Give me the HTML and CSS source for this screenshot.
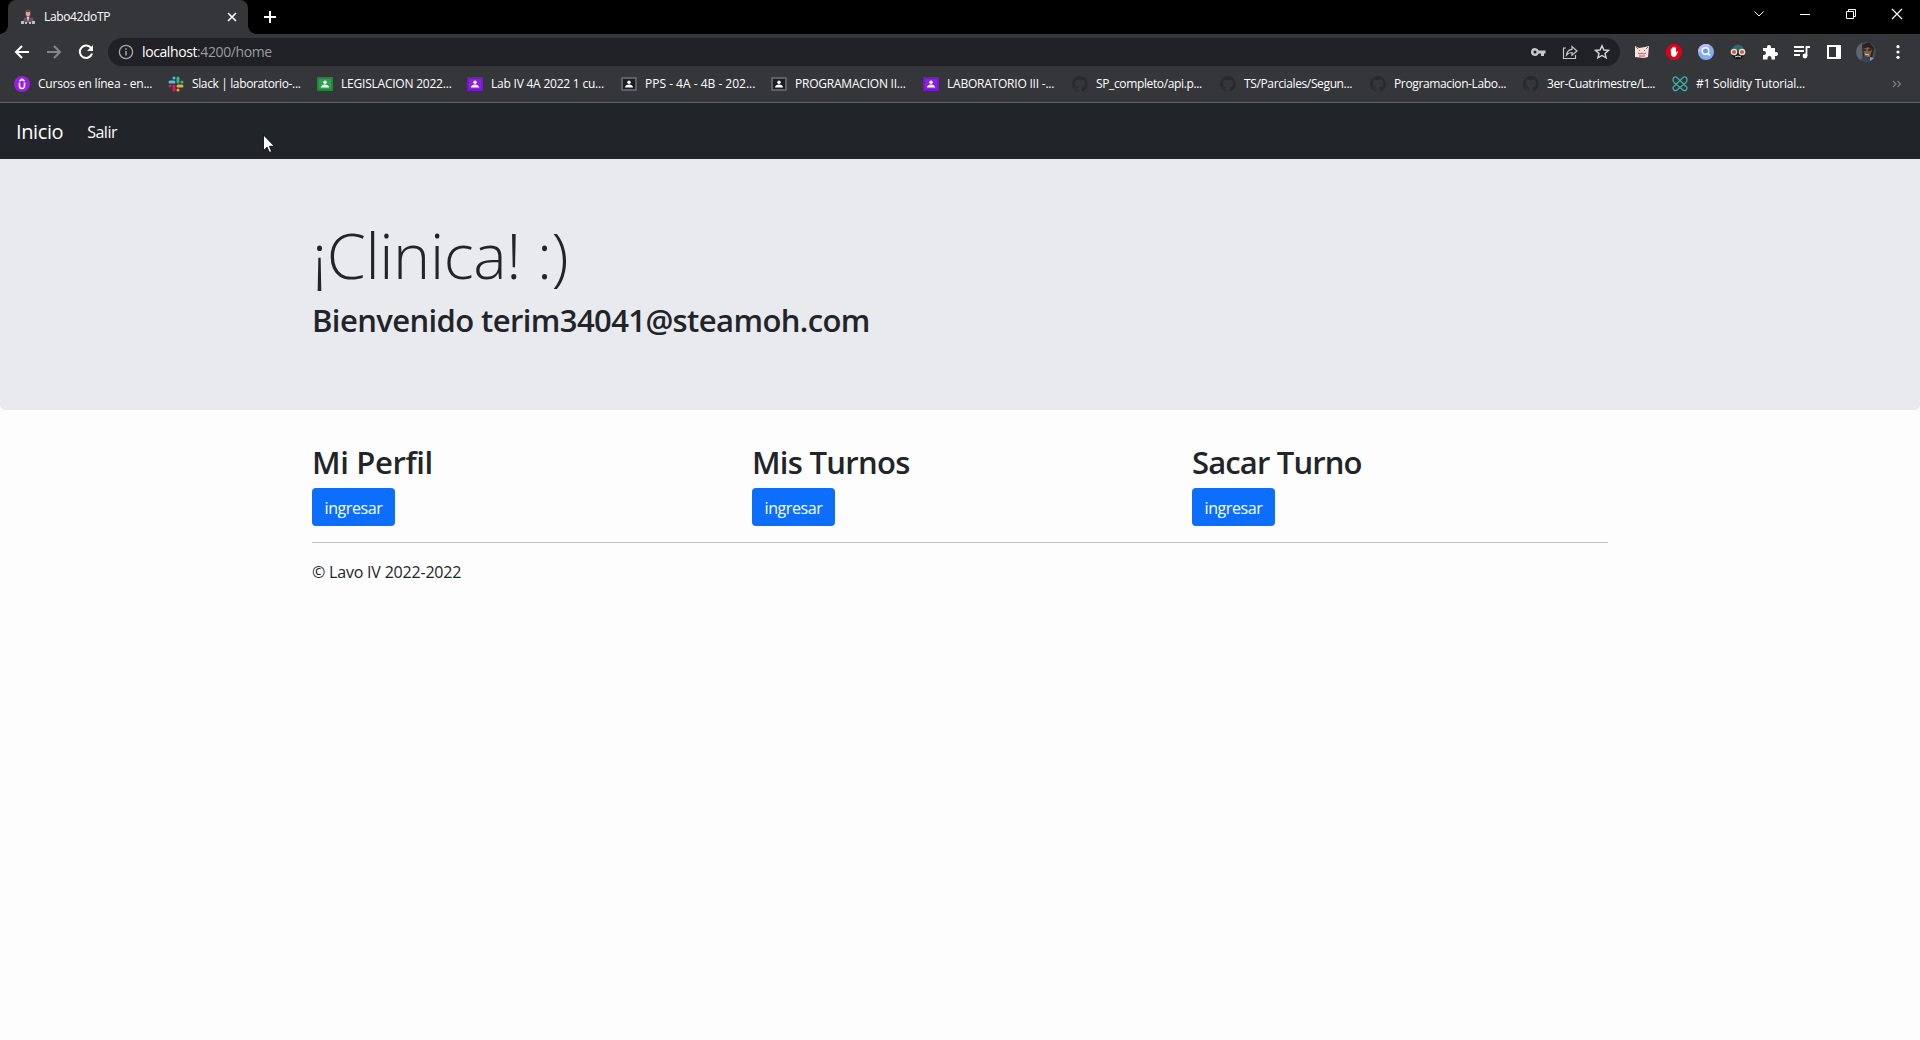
FILE: index.html
```html
<!DOCTYPE html>
<html lang="es">
<head>
<meta charset="utf-8">
<title>Labo42doTP</title>
<link rel="stylesheet" href="styles.css">
</head>
<body>
<svg class="defs" aria-hidden="true">
  <symbol id="classroom" viewBox="0 0 16 16"><rect y="1" width="16" height="14" rx="1" fill="currentColor"/><rect x="2" y="3" width="12" height="10" fill="var(--board)"/><circle cx="8" cy="6.2" r="1.7" fill="#fff"/><path d="M4 11.5c0-4 8-4 8 0z" fill="#fff"/></symbol>
  <symbol id="github" viewBox="0 0 16 16"><path fill="#292a2d" d="M8 0a8 8 0 0 0-2.5 15.6c.4.1.5-.2.5-.4v-1.5c-2.2.5-2.7-1-2.7-1-.4-.9-.9-1.2-.9-1.2-.7-.5.1-.5.1-.5.8.1 1.2.8 1.2.8.7 1.3 1.9.9 2.3.7.1-.5.3-.9.5-1.1-1.8-.2-3.6-.9-3.6-4 0-.9.3-1.6.8-2.1-.1-.2-.4-1 .1-2.1 0 0 .7-.2 2.2.8a7.6 7.6 0 0 1 4 0c1.500-1 2.200-.8 2.200-.8.4 1.100.2 1.900.1 2.100.5.6.8 1.300.8 2.100 0 3.100-1.900 3.700-3.700 3.900.3.300.6.800.6 1.500v2.200c0 .2.100.5.500.4A8 8 0 0 0 8 0z"/></symbol>
</svg>

<header class="browser">
  <div class="tabstrip">
    <div class="tab">
      <svg class="favicon" width="16" height="16" viewBox="0 0 16 16"><path d="M5 2l3-2 3 2v4l-1 2H6L5 6z" fill="#71434b"/><path d="M6 3h4v3L8 8 6 6z" fill="#d4a6a0"/><path d="M4 9l3-1 1 2 1-2 4 1 1 5H3z" fill="#6c526b"/><path d="M7 8l1 5 1-5z" fill="#f0f0f4"/><path d="M1 12h3v3H1zM12 12h3v3h-3zM5 13h2v2H5zM9 13h2v2H9z" fill="#a8c6d2"/></svg>
      <span class="tab-title">Labo42doTP</span>
      <svg class="tab-close" width="10" height="10" viewBox="0 0 10 10"><path d="M1 1l8 8M9 1L1 9" stroke="#fff" stroke-width="1.6"/></svg>
    </div>
    <svg class="tab-new" width="12" height="12" viewBox="0 0 12 12"><path d="M6 0v12M0 6h12" stroke="#fff" stroke-width="2"/></svg>
    <div class="window-buttons">
      <svg width="12" height="12" viewBox="0 0 12 12"><path d="M1.500 3.500L6 8l4.500-4.500" stroke="#fff" fill="none"/></svg>
      <svg width="12" height="12" viewBox="0 0 12 12"><path d="M1 6.500h10" stroke="#fff"/></svg>
      <svg width="12" height="12" viewBox="0 0 12 12"><path d="M1.500 3.500h7v7h-7zM3.500 3.500v-2h7v7h-2" stroke="#fff" fill="none"/></svg>
      <svg width="12" height="12" viewBox="0 0 12 12"><path d="M1 1l10 10M11 1L1 11" stroke="#fff" stroke-width="1.200"/></svg>
    </div>
  </div>

  <div class="toolbar">
    <div class="history">
      <svg width="16" height="16" viewBox="0 0 16 16"><path d="M15 8H2M8 2L2 8l6 6" stroke="#fff" stroke-width="2" fill="none"/></svg>
      <svg width="16" height="16" viewBox="0 0 16 16"><path d="M1 8h13M8 2l6 6-6 6" stroke="#85868a" stroke-width="2" fill="none"/></svg>
      <svg width="16" height="16" viewBox="0 0 16 16"><path d="M13.300 4.500A6.200 6.200 0 1 0 14 9.500" stroke="#fff" stroke-width="2" fill="none"/><path d="M15 1v6H9z" fill="#fff"/></svg>
    </div>
    <div class="omnibox">
      <svg width="16" height="16" viewBox="0 0 16 16"><circle cx="8" cy="8" r="6.600" stroke="#a5a7aa" stroke-width="1.300" fill="none"/><path d="M8 7v4.500M8 4.200v1.600" stroke="#a5a7aa" stroke-width="1.500"/></svg>
      <span class="url"><b>localhost</b>:4200/home</span>
      <div class="omnibox-actions">
        <svg width="16" height="16" viewBox="0 0 16 16"><path fill="#c5c7ca" fill-rule="evenodd" d="M5 4a4 4 0 1 0 3.700 5.500H11V12h3V9.500h1.500v-3H8.700A4 4 0 0 0 5 4zm0 2.500a1.500 1.500 0 1 1 0 3 1.500 1.500 0 0 1 0-3z"/></svg>
        <svg width="16" height="16" viewBox="0 0 16 16"><path d="M4 4H1.500v10.500h12V11M4.500 11c.5-4 2.500-5.500 5.500-5.700V2.500l5 4.500-5 4.300V8.500c-2.500 0-4 .7-5.500 2.500z" stroke="#c5c7ca" stroke-width="1.200" fill="none"/></svg>
        <svg width="16" height="16" viewBox="0 0 16 16"><path d="M8 1.800l1.900 4.200 4.600.4-3.500 3 1.100 4.500L8 11.500l-4.100 2.400L5 9.400l-3.500-3 4.600-.4z" stroke="#d5d7da" stroke-width="1.400" fill="none"/></svg>
      </div>
    </div>
    <div class="extensions">
      <svg width="16" height="16" viewBox="0 0 16 16"><path d="M1 2l4 2 6-1 4-1-1 11-4 1-9-1z" fill="#f6e2e2"/><path d="M5 6l1 1M10 7l1-1M4 9l2 1 2-1 2 1 2-1M5 12h6M2 3l2 2M14 3l-2 2" stroke="#cf4450" fill="none"/></svg>
      <svg width="16" height="16" viewBox="0 0 16 16"><path d="M5 0h6l5 5v6l-5 5H5l-5-5V5z" fill="#dc0018"/><path d="M4.800 8V5q.8-1 1.300 0V3.500q.7-1 1.300 0V3q.7-1 1.300 0v.7q.7-1 1.300 0V9l1-1.500q1-.5 1 .3L10 12q-2 2-4 .3Q4.800 11 4.800 8z" fill="#fff"/></svg>
      <svg width="16" height="16" viewBox="0 0 16 16"><circle cx="8" cy="8" r="8" fill="#83aef0"/><path d="M0 8a8 8 0 0 1 12-7L8 8z" fill="#b9b8f5"/><circle cx="7.500" cy="7" r="3.200" fill="#6999ed" stroke="#fff" stroke-width="1.400"/><path d="M10 9.500l2 2" stroke="#fff" stroke-width="1.400"/></svg>
      <svg width="16" height="16" viewBox="0 0 16 16"><path d="M2 6c1-7 11-7 12 0z" fill="#2b6870"/><path d="M2 7h12v5l-3 3H5l-3-3z" fill="#17191d"/><circle cx="4" cy="8" r="2.700" fill="#d85a3e" stroke="#e3e5df" stroke-width="1.300"/><circle cx="12" cy="8" r="2.700" fill="#d85a3e" stroke="#e3e5df" stroke-width="1.300"/><path d="M5 13q3-2 6 0" stroke="#ddd" fill="none"/></svg>
      <svg width="16" height="16" viewBox="0 0 16 16"><path fill="#fff" d="M1 4h4V3a2 2 0 0 1 4 0v1h4v4h1a2 2 0 0 1 0 4h-1v3.500H9.500V14a2 2 0 0 0-4 0v1.500H1V11h1a2 2 0 0 0 0-4H1z"/></svg>
      <svg width="16" height="16" viewBox="0 0 16 16"><path d="M0 3h10M0 7h10M0 11h6" stroke="#fff" stroke-width="1.800"/><path d="M12.500 12V3H16" stroke="#fff" stroke-width="1.800" fill="none"/><circle cx="11" cy="12" r="2.400" fill="#fff"/></svg>
      <svg width="16" height="16" viewBox="0 0 16 16"><path d="M1 1h14v14H1zM3 3v10h7V3z" fill="#fff" fill-rule="evenodd"/></svg>
      <svg class="avatar" width="20" height="20" viewBox="0 0 20 20"><clipPath id="round"><circle cx="10" cy="10" r="10"/></clipPath><g clip-path="url(#round)"><path d="M0 0h20v20H0z" fill="#454b4c"/><path d="M0 0h6v20H0z" fill="#5c6670"/><path d="M6 3l7-3 5 6-2 10-8 2z" fill="#2c211f"/><path d="M7 7l5-2 4 3-2 7-5 1z" fill="#805b48"/><path d="M7 8h3M12 8h3" stroke="#271d1b" stroke-width="1.500"/><path d="M1 20l8-6 5 2 3 4z" fill="#37445c"/><path d="M14 15l4 1v4h-4z" fill="#72a7b1"/><path d="M9 12l4 1" stroke="#ded4c5"/></g></svg>
      <svg width="16" height="16" viewBox="0 0 16 16"><g fill="#fff"><circle cx="8" cy="2.700" r="1.600"/><circle cx="8" cy="8" r="1.600"/><circle cx="8" cy="13.300" r="1.600"/></g></svg>
    </div>
  </div>

  <nav class="bookmarks">
    <a class="loose"><svg viewBox="0 0 16 16"><circle cx="8" cy="8" r="8" fill="#9b1de8"/><path d="M5.500 6.500V10a2.500 2.500 0 0 0 5 0V6.500M5.500 5L8 3.300 10.500 5" fill="none" stroke="#fff" stroke-width="1.600"/></svg><span>Cursos en línea - en...</span></a>
    <a><svg viewBox="0 0 16 16"><g stroke-width="3" stroke-linecap="round"><path d="M6 2v.1M2 6h4" stroke="#50bfe5"/><path d="M10 2v4M14 6v.1" stroke="#3eb27d"/><path d="M14 10h-4M10 14v.1" stroke="#e5ad39"/><path d="M6 14v-4M2 10v.1" stroke="#d5204f"/></g></svg><span>Slack | laboratorio-...</span></a>
    <a class="loose"><svg class="board-green"><use href="#classroom"/></svg><span>LEGISLACION 2022...</span></a>
    <a class="loose"><svg class="board-purple"><use href="#classroom"/></svg><span>Lab IV 4A 2022 1 cu...</span></a>
    <a class="looser"><svg class="board-gray"><use href="#classroom"/></svg><span>PPS - 4A - 4B - 202...</span></a>
    <a class="loose"><svg class="board-gray"><use href="#classroom"/></svg><span>PROGRAMACION II...</span></a>
    <a class="loose"><svg class="board-purple"><use href="#classroom"/></svg><span>LABORATORIO III -...</span></a>
    <a><svg><use href="#github"/></svg><span>SP_completo/api.p...</span></a>
    <a><svg><use href="#github"/></svg><span>TS/Parciales/Segun...</span></a>
    <a><svg><use href="#github"/></svg><span>Programacion-Labo...</span></a>
    <a><svg><use href="#github"/></svg><span>3er-Cuatrimestre/L...</span></a>
    <a class="loose"><svg viewBox="0 0 16 16"><g fill="none" stroke="#3aafa9" stroke-width="1.300"><path d="M1 3.500C1 1 3.500 0 5.500 2l8.700 8.500c2 2-.7 5.500-3.200 3.500L2 6.500C1.300 5.500 1 4.500 1 3.500z"/><path d="M15 3.500C15 1 12.500 0 10.500 2l-8.700 8.500c-2 2 .7 5.500 3.200 3.500l9-7.500c.7-1 1-2 1-3z"/></g></svg><span>#1 Solidity Tutorial...</span></a>
    <svg class="more" viewBox="0 0 10 10"><path d="M1 2l3 3-3 3M5.500 2l3 3-3 3" stroke="#7b7c80" stroke-width="1.200" fill="none"/></svg>
  </nav>
</header>

<nav class="navbar">
  <a class="brand">Inicio</a>
  <a class="nav-link">Salir</a>
</nav>

<main>
  <section class="jumbotron">
    <div class="container">
      <h1>¡Clinica! :)</h1>
      <h2 class="welcome">Bienvenido terim34041@steamoh.com</h2>
    </div>
  </section>
  <div class="container">
    <div class="cards">
      <section><h2 class="profile">Mi Perfil</h2><button>ingresar</button></section>
      <section><h2 class="appointments">Mis Turnos</h2><button>ingresar</button></section>
      <section><h2 class="book">Sacar Turno</h2><button>ingresar</button></section>
    </div>
    <hr>
    <footer>© Lavo IV 2022-2022</footer>
  </div>
</main>

<svg class="cursor" width="12" height="19" viewBox="0 0 12 19"><path d="M.5 1v15.500l3.600-3.400 2.300 5.300 2.200-1-2.200-5.100h5z" fill="#fff" stroke="#000" stroke-width=".8"/></svg>
</body>
</html>
```
FILE: styles.css
```css
* { box-sizing: border-box; }
body { margin: 0; min-height: 1040px; background: #fdfdfd; color: #212529; font: 16px/24px "Open Sans", "Noto Sans", sans-serif; overflow: hidden; }
svg { display: block; flex: none; }
.defs { position: absolute; width: 0; height: 0; }

.browser { height: 103px; background: #35363a; border-bottom: 1px solid #5c6470; color: #fff; font-size: 12px; }
.tabstrip { display: flex; align-items: center; height: 34px; padding-left: 8px; background: #000; }
.tab { position: relative; display: flex; align-items: center; width: 240px; height: 34px; padding: 0 12px; background: #35363a; border-radius: 8px 8px 0 0; }
.tab::before, .tab::after { content: ""; position: absolute; bottom: 0; width: 8px; height: 8px; }
.tab::before { left: -8px; background: radial-gradient(circle at 0 0, #000 7.5px, #35363a 8px); }
.tab::after { right: -8px; background: radial-gradient(circle at 100% 0, #000 7.5px, #35363a 8px); }
.tab-title { margin-left: 8px; letter-spacing: -.35px; }
.tab-close { margin-left: auto; margin-right: -1px; }
.tab-new { margin-left: 16px; }
.window-buttons { display: flex; gap: 34px; margin-left: auto; padding: 0 17px 6px 0; }

.toolbar { display: flex; align-items: center; height: 36px; padding: 0 14px; }
.history { display: flex; gap: 16px; }
.omnibox { display: flex; align-items: center; width: 1512px; height: 28px; margin-left: 14px; padding: 0 10px; border-radius: 14px; background: #202124; }
.url { margin-left: 8px; color: #9a9ca0; font-size: 14px; letter-spacing: -.4px; }
.url b { font-weight: 400; color: #fff; }
.omnibox-actions { display: flex; gap: 16px; margin-left: auto; }
.extensions { display: flex; align-items: center; gap: 16px; margin-left: 14px; }
.avatar { margin: 0 -2px; }

.bookmarks { display: grid; grid-template-columns: 154px 149px 150px 154px 150px 152px 149px 148px 150px 153px 149px 1fr 10px; align-items: center; height: 28px; padding: 0 18px 0 14px; }
.bookmarks a { display: flex; align-items: center; gap: 8px; white-space: nowrap; letter-spacing: -.37px; }
.bookmarks .loose { letter-spacing: -.22px; }
.bookmarks .looser { letter-spacing: 0; }
.bookmarks a svg { width: 16px; height: 16px; }
.board-green { color: #24853c; --board: #2aa14a; }
.board-purple { color: #7418c8; --board: #8c20df; }
.board-gray { color: #5e5f64; --board: #1d1e20; }
.more { width: 10px; height: 10px; }

.navbar { display: flex; align-items: center; gap: 24px; height: 56px; padding: 1px 16px 0; background: #212529; color: #fff; }
.brand { font-size: 20px; letter-spacing: -.4px; }
.nav-link { letter-spacing: -.5px; }

.jumbotron { height: 251px; padding-top: 57px; background: #e8eaed; border-radius: 0 0 5px 5px; }
.container { width: 1320px; margin: 0 auto; padding: 0 12px; }
h1 { margin: 0 0 8px; font-size: 63px; line-height: 77px; font-weight: 300; letter-spacing: -.4px; }
h2 { margin: 0 0 7px; font-size: 31px; line-height: 38px; font-weight: 600; letter-spacing: -.6px; }
.profile { letter-spacing: -.35px; }
.appointments { letter-spacing: -.7px; }
.book { letter-spacing: -.85px; }
.cards { display: grid; grid-template-columns: repeat(3, 440px); padding-top: 33px; }
button { display: block; width: 83px; height: 38px; padding: 1px 0 0; border: 0; border-radius: 4px; background: #0d6efd; color: #fff; font: 16px/24px "Open Sans", "Noto Sans", sans-serif; letter-spacing: -.4px; }
hr { margin: 16px 0 17px; height: 1px; border: 0; background: #bfc0c1; }
footer { letter-spacing: -.2px; }
.cursor { position: absolute; left: 263px; top: 134px; }
```
